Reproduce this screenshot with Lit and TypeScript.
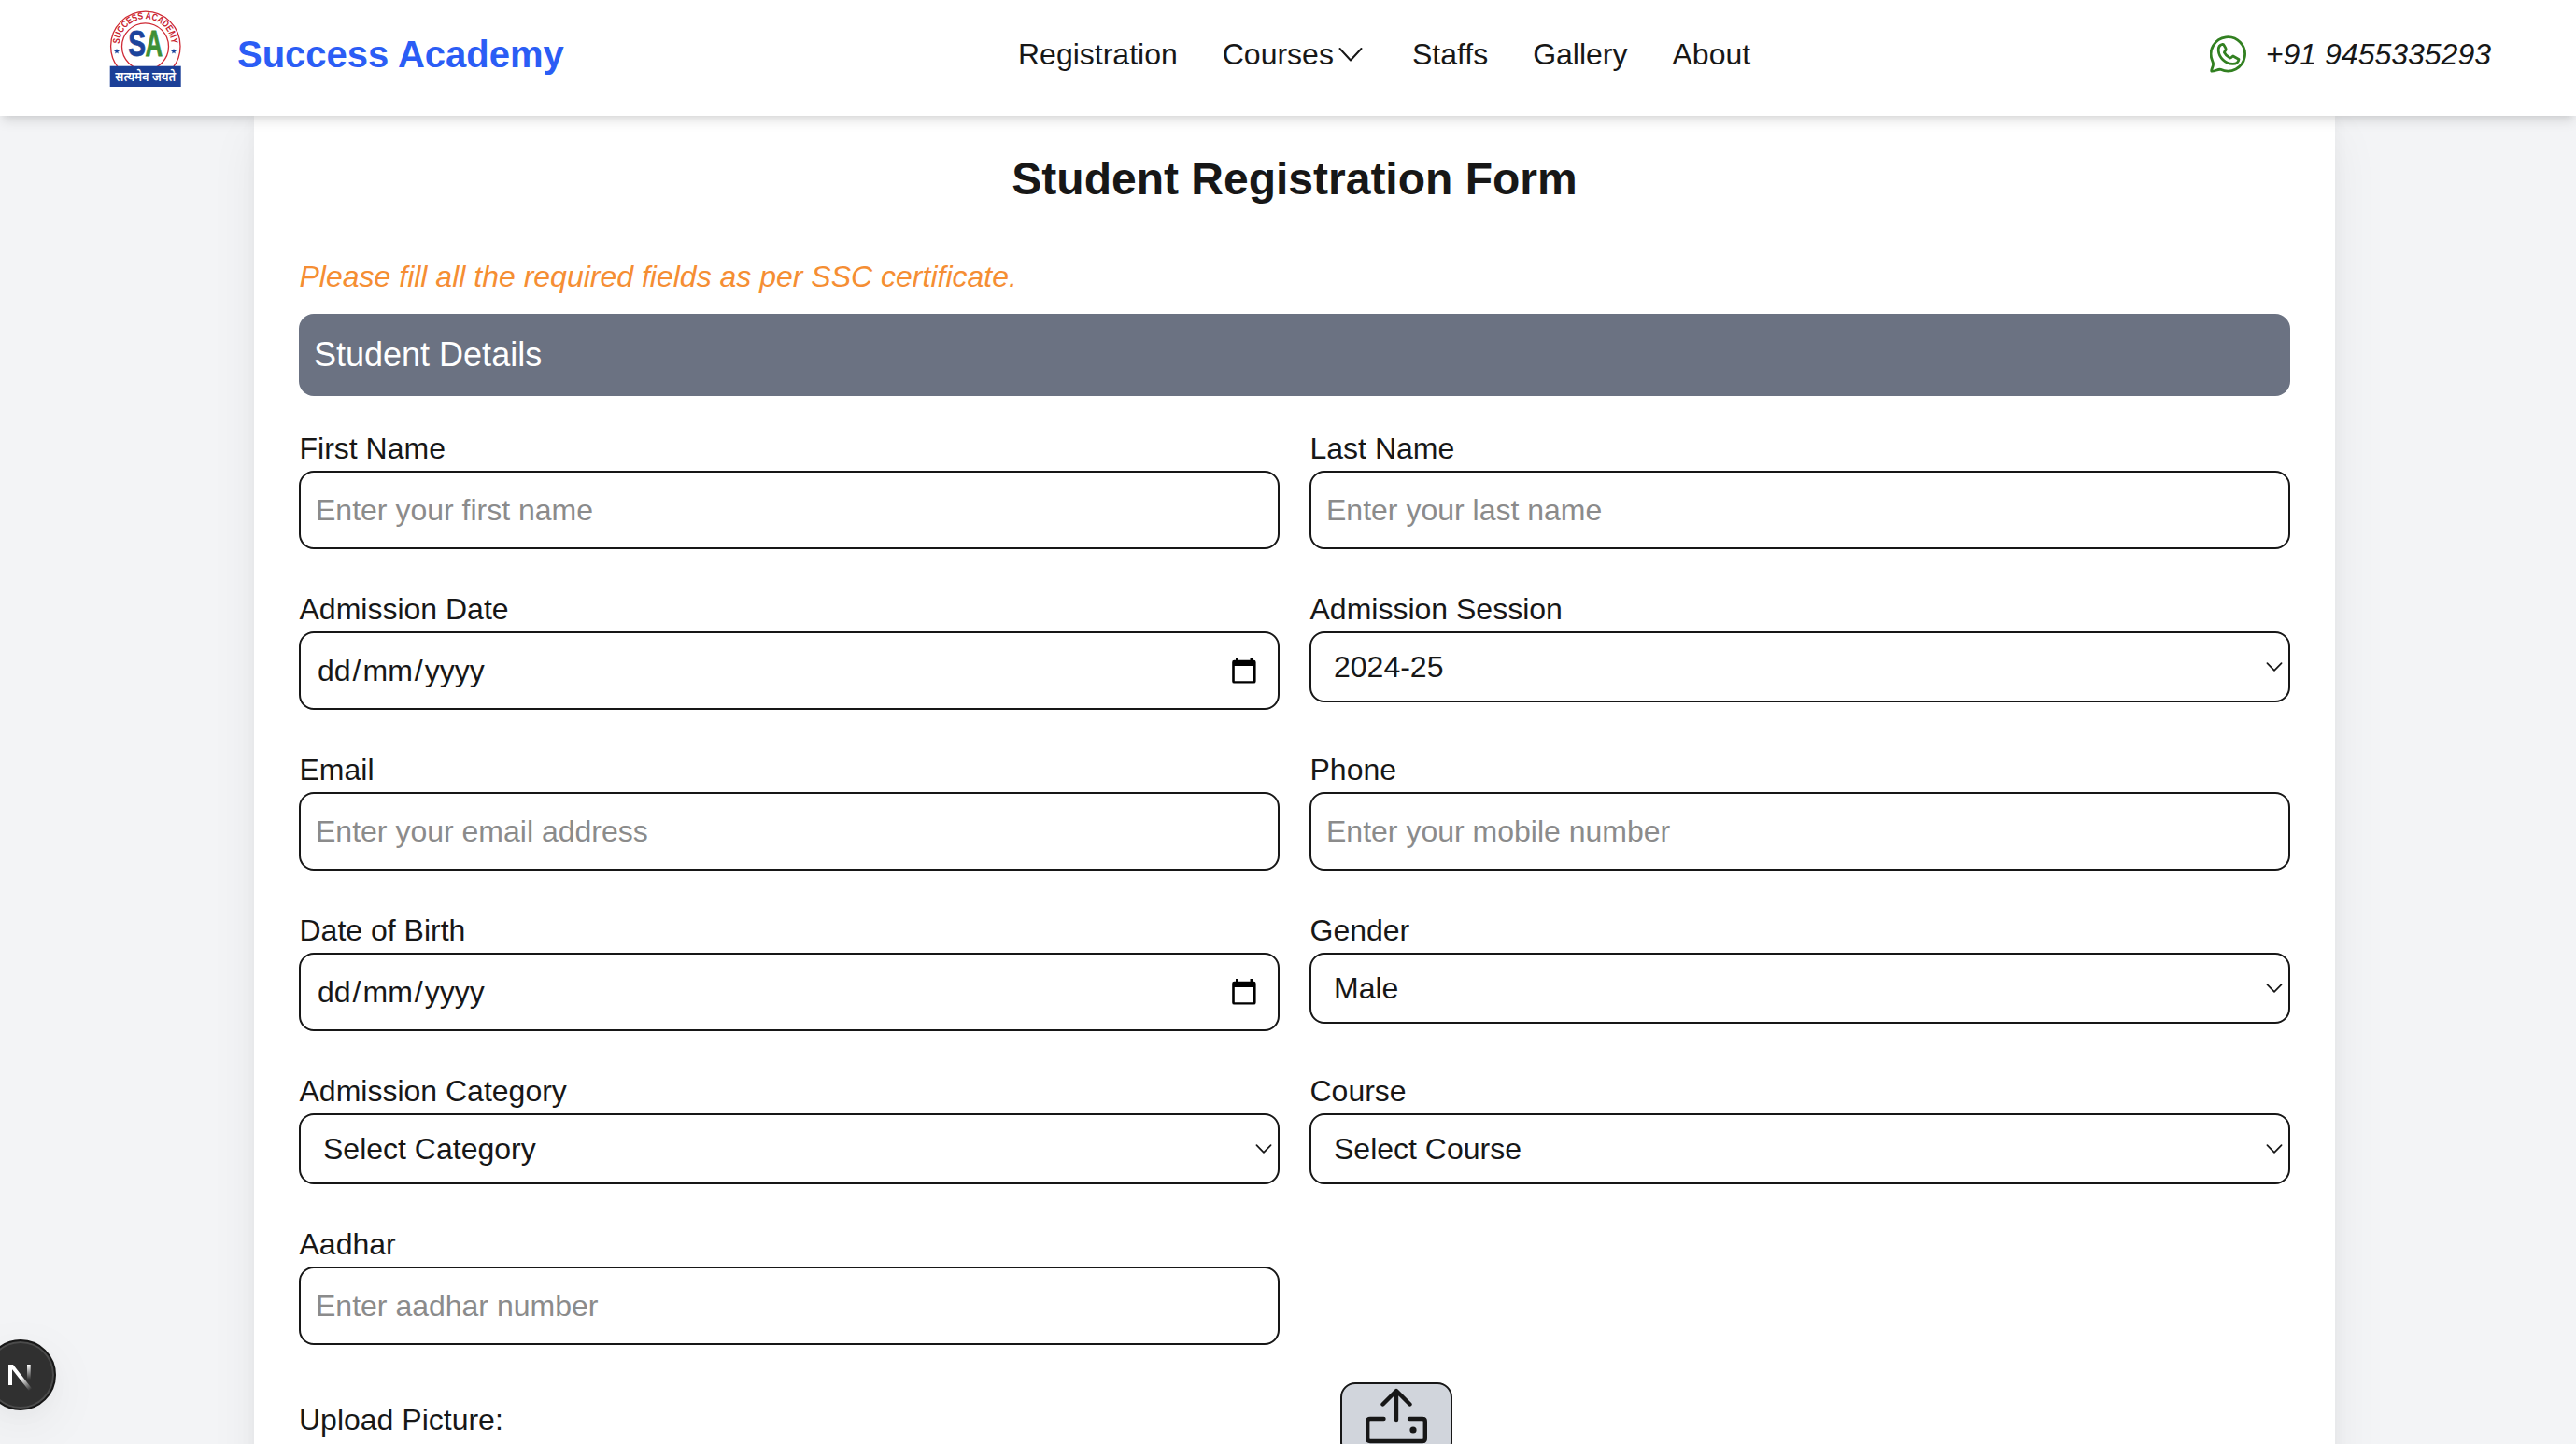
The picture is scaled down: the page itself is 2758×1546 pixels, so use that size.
import { LitElement, html, css, svg } from "lit";
import { customElement } from "lit/decorators.js";

type Field = { label: string; kind: "text" | "date" | "select"; value: string };

const FIELDS: Field[] = [
  { label: "First Name", kind: "text", value: "Enter your first name" },
  { label: "Last Name", kind: "text", value: "Enter your last name" },
  { label: "Admission Date", kind: "date", value: "" },
  { label: "Admission Session", kind: "select", value: "2024-25" },
  { label: "Email", kind: "text", value: "Enter your email address" },
  { label: "Phone", kind: "text", value: "Enter your mobile number" },
  { label: "Date of Birth", kind: "date", value: "" },
  { label: "Gender", kind: "select", value: "Male" },
  { label: "Admission Category", kind: "select", value: "Select Category" },
  { label: "Course", kind: "select", value: "Select Course" },
  { label: "Aadhar", kind: "text", value: "Enter aadhar number" },
];

const star = (x: number, y: number) => svg`<path fill="#1c449c" transform="translate(${x} ${y})"
  d="M0-3.2 .8-1 3.1-1 1.3.4 1.9 2.6 0 1.3-1.9 2.6-1.3.4-3.1-1-.8-1Z"/>`;

@customElement("app-root")
export class AppRoot extends LitElement {
  static styles = css`
    :host {
      display: block;
      height: 1546px;
      overflow: hidden;
      position: relative;
      background: #f3f4f6;
      color: #171717;
      font: 32px/48px "Liberation Sans", Arial, sans-serif;
    }
    * { box-sizing: border-box; }
    svg { display: block; flex: none; }
    .header {
      position: relative;
      z-index: 2;
      display: grid;
      grid-template-columns: 1090px 1fr auto;
      height: 124px;
      padding: 0 91px 0 0;
      background: #fff;
      box-shadow: 0 8px 12px -2px rgba(0,0,0,.1), 0 4px 8px -4px rgba(0,0,0,.1);
    }
    .brand { display: flex; padding-left: 116px; gap: 58px; }
    .logo { margin-top: 10px; overflow: visible; }
    .brand-name { margin-top: 30px; font-size: 40px; line-height: 56px; font-weight: 700; color: #2b5df5; }
    .nav { display: flex; gap: 48px; height: 48px; margin-top: 34px; }
    .courses { display: flex; align-items: center; gap: 4px; padding-right: 4px; }
    .phone { display: flex; align-items: center; gap: 20px; height: 48px; margin-top: 34px; font-style: italic; }
    .card {
      width: 2228px;
      height: 1700px;
      margin-left: 272px;
      padding: 32px 48px;
      background: #fff;
      box-shadow: 0 20px 50px rgba(0,0,0,.06), 0 0 16px rgba(0,0,0,.04);
    }
    .title { margin: 0; font-size: 48px; line-height: 72px; font-weight: 700; text-align: center; }
    .note { margin-top: 44px; padding-left: .5px; font-style: italic; color: #f58e33; }
    .section {
      margin: 16px 0 32px;
      height: 88px;
      padding: 0 16px;
      border-radius: 16px;
      background: #6b7282;
      color: #fff;
      font-size: 36px;
      line-height: 88px;
    }
    .fields { display: grid; grid-template-columns: 1fr 1fr; gap: 40px 32px; align-items: start; }
    .label { display: block; padding-left: .5px; }
    .control {
      display: flex;
      align-items: center;
      justify-content: space-between;
      width: 100%;
      height: 84px;
      border: 2px solid #171717;
      border-radius: 16px;
      padding: 0 16px;
      background: #fff;
      font: inherit;
      color: inherit;
      outline: none;
    }
    .control::placeholder { color: #8b8b8b; opacity: 1; }
    .date { padding: 0 23px 0 18px; }
    .date-text { display: flex; gap: 2px; }
    .select { height: 76px; padding: 0 6px 0 24px; }
    .upload { display: flex; align-items: center; margin-top: 40px; }
    .upload-label { width: 1115px; }
    .upload-button {
      display: flex;
      justify-content: center;
      width: 120px;
      height: 80px;
      padding-top: 4px;
      border: 2px solid #171717;
      border-radius: 16px;
      background: #d1d5dc;
    }
    .badge {
      position: absolute;
      z-index: 3;
      left: -16px;
      top: 1434px;
      width: 76px;
      height: 76px;
      border-radius: 50%;
      border: 2px solid #171717;
      background: #303030;
      box-shadow: inset 0 0 0 2px #4b4b4b, 0 16px 60px rgba(0,0,0,.06), 0 8px 24px -4px rgba(0,0,0,.03);
    }
  `;

  private logo() {
    return html`<svg class="logo" width="80" height="86" viewBox="116 10 80 86">
      <defs>
        <path id="ring" d="M127.8 48A27.8 27.8 0 0 1 183.4 48" fill="none" />
        <clipPath id="top"><rect x="110" y="5" width="90" height="67" /></clipPath>
      </defs>
      <g clip-path="url(#top)" fill="none" stroke="#cf2a35">
        <circle cx="155.8" cy="49.4" r="37.2" stroke-width="1.3" />
        <circle cx="155.5" cy="49.8" r="25" stroke-width="1.3" />
      </g>
      <text font-family="Liberation Sans" font-weight="700" font-size="10.4" fill="#c9242f" textLength="85" lengthAdjust="spacingAndGlyphs">
        <textPath href="#ring" startOffset="1">SUCCESS ACADEMY</textPath>
      </text>
      <text x="137.2" y="60" font-family="Liberation Sans" font-weight="700" font-size="38" textLength="18.8" lengthAdjust="spacingAndGlyphs" fill="#1c449c" stroke="#1c449c" stroke-width=".8">S</text>
      <text x="155.6" y="60" font-family="Liberation Sans" font-weight="700" font-size="38.5" textLength="18.6" lengthAdjust="spacingAndGlyphs" fill="#3d9036" stroke="#3d9036" stroke-width=".8">A</text>
      ${star(125, 55)}${star(186, 55)}
      <rect x="117.7" y="70.7" width="76" height="22.3" fill="#1b3f97" />
      <text x="123.3" y="87.2" font-family="Noto Sans Devanagari, Noto Sans, sans-serif" font-weight="600" font-size="15" fill="#fff" textLength="65" lengthAdjust="spacingAndGlyphs">सत्यमेव जयते</text>
    </svg>`;
  }

  private calendar() {
    return html`<svg width="26" height="28" viewBox="0 0 26 28">
      <path d="M3 2.8H4V0H6.5V2.8H19.5V0H22V2.8H23.4Q25.6 2.8 25.6 5V25.4Q25.6 27.6 23.4 27.6H2.4Q.2 27.6.2 25.4V5Q.2 2.8 2.4 2.8ZM2.8 9V25.2H23V9Z" fill="#000" fill-rule="evenodd" />
    </svg>`;
  }

  private control(f: Field) {
    if (f.kind === "text") return html`<input class="control" placeholder=${f.value} />`;
    if (f.kind === "date")
      return html`<div class="control date">
        <span class="date-text"><span>dd</span><span>/</span><span>mm</span><span>/</span><span>yyyy</span></span>
        ${this.calendar()}
      </div>`;
    return html`<div class="control select">
      <span>${f.value}</span>
      <svg width="18" height="12" viewBox="0 0 18 12"><path d="M1.4 2.2 9 9.8 16.6 2.2" fill="none" stroke="#171717" stroke-width="1.7" stroke-linecap="round" stroke-linejoin="round" /></svg>
    </div>`;
  }

  render() {
    return html`
      <header class="header">
        <div class="brand">${this.logo()}<span class="brand-name">Success Academy</span></div>
        <nav class="nav">
          <span>Registration</span>
          <span class="courses">Courses
            <svg width="28" height="26" viewBox="0 0 28 26"><path d="M2.5 7 14 19.5 25.5 7" fill="none" stroke="#171717" stroke-width="2" stroke-linecap="round" stroke-linejoin="round" /></svg>
          </span>
          <span>Staffs</span><span>Gallery</span><span>About</span>
        </nav>
        <div class="phone">
          <svg width="40" height="40" viewBox="0 0 40 40" fill="none" stroke="#328021" stroke-width="2.8" stroke-linejoin="round" stroke-linecap="round">
            <path d="M2.6 27A18.2 18.2 0 1 1 11.5 36.3C8.5 35.8 5 38.5 1.9 38.2C.6 37.5 3.8 33.5 3.6 30.4C3.5 29 3 28 2.6 27Z" />
            <path d="M13.6 9.4C10.5 10 9 12.6 9.2 16C9.8 23.8 16.4 30 24.4 30.4C28 30.5 30.4 28.8 31 25.4L24.8 22C23.5 23 22.6 24.3 21.4 24C18.6 22.6 16.6 20.8 15.4 18.2C15.4 17 17 16.2 17.2 14.8C17 12.9 15.4 11 14.6 9.6Z" />
          </svg>
          <span>+91 9455335293</span>
        </div>
      </header>
      <main class="card">
        <h1 class="title">Student Registration Form</h1>
        <div class="note">Please fill all the required fields as per SSC certificate.</div>
        <div class="section">Student Details</div>
        <div class="fields">
          ${FIELDS.map((f) => html`<div><span class="label">${f.label}</span>${this.control(f)}</div>`)}
        </div>
        <div class="upload">
          <span class="upload-label">Upload Picture:</span>
          <div class="upload-button">
            <svg width="68" height="70" viewBox="0 0 68 70" fill="none" stroke="#171717" stroke-width="4.4" stroke-linecap="round" stroke-linejoin="round">
              <path d="M34 34V3.5M19.5 17.5 34 3 48.5 17.5M20.5 33H6Q3.2 33 3.2 36V54Q3.2 57 6 57H62Q64.8 57 64.8 54V36Q64.8 33 62 33H48" />
              <circle cx="52" cy="45" r="3.6" fill="#171717" stroke="none" />
            </svg>
          </div>
        </div>
      </main>
      <div class="badge">
        <svg width="72" height="72" viewBox="0 0 72 72">
          <defs>
            <linearGradient id="diag" gradientUnits="userSpaceOnUse" x1="38" y1="38" x2="48" y2="51"><stop stop-color="#fff" /><stop offset="1" stop-color="#fff" stop-opacity="0" /></linearGradient>
            <linearGradient id="stem" x1="0" y1="0" x2="0" y2="1"><stop stop-color="#fff" /><stop offset="1" stop-color="#fff" stop-opacity="0" /></linearGradient>
          </defs>
          <path d="M23 25H27V47H23Z" fill="#fff" />
          <path d="M23 25H28L48 50.5 45 53Z" fill="url(#diag)" />
          <rect x="43" y="25" width="3.7" height="16" fill="url(#stem)" />
        </svg>
      </div>
    `;
  }
}
